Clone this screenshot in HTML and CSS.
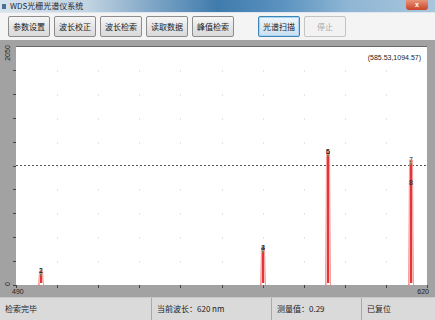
FILE: index.html
```html
<!DOCTYPE html>
<html lang="zh">
<head>
    <meta charset="UTF-8">
    <title>WDS光栅光谱仪系统</title>
    <link rel="stylesheet" href="styles.css">
</head>
<body>

    <!-- Window title bar -->
    <div class="titlebar">
        <span class="app-icon"></span>
        <span class="title">WDS光栅光谱仪系统</span>
        <span class="close-btn">x</span>
    </div>

    <!-- Toolbar -->
    <div class="toolbar">
        <div class="group">
            <button class="btn">参数设置</button>
            <button class="btn">波长校正</button>
            <button class="btn">波长检索</button>
            <button class="btn">读取数据</button>
            <button class="btn">峰值检索</button>
        </div>
        <div class="group">
            <button class="btn active">光谱扫描</button>
            <button class="btn" disabled>停止</button>
        </div>
    </div>

    <!-- Spectrum chart -->
    <div class="chart">
        <svg width="435" height="257" viewBox="0 0 435 257">
            <rect x="16" y="6" width="411" height="239" fill="#fff"/>
            <line x1="16" y1="6.5" x2="427" y2="6.5" stroke="#6a6a6a"/>
            <g id="grid"></g>
            <line x1="16" y1="125.5" x2="427" y2="125.5" stroke="#555" stroke-dasharray="2,2"/>
            <g id="peaks"></g>
            <text class="coord" x="421" y="20" text-anchor="end">(585.53,1094.57)</text>
            <text class="axis" transform="translate(10,13) rotate(-90)" text-anchor="middle">2050</text>
            <text class="axis" transform="translate(10,244) rotate(-90)" text-anchor="middle">0</text>
            <text class="axis" x="12" y="254">490</text>
            <text class="axis" x="429" y="254" text-anchor="end">620</text>
        </svg>
    </div>

    <!-- Status bar -->
    <div class="statusbar">
        <div class="cell w1">检索完毕</div>
        <div class="cell w2">当前波长：620 nm</div>
        <div class="cell w3">测量值：0.29</div>
        <div class="cell w4">已复位</div>
    </div>

    <script>
        var ns = 'http://www.w3.org/2000/svg';

        function el(name, attrs, parent) {
            var e = document.createElementNS(ns, name);
            for (var k in attrs) e.setAttribute(k, attrs[k]);
            parent.appendChild(e);
            return e;
        }

        // grid marks and axis ticks, 10 x 10
        var grid = document.getElementById('grid');
        for (var i = 0; i <= 10; i++) {
            var x = Math.round(16 + i * 41.1);
            el('rect', { x: x, y: 245, width: 1, height: 3, fill: '#444' }, grid);
            for (var j = 1; j < 10; j++) {
                var y = Math.round(6 + j * 23.9);
                if (i > 0 && i < 10) el('rect', { x: x, y: y, width: 1, height: 2, fill: '#e4e4e4' }, grid);
            }
        }
        for (var j = 1; j <= 10; j++) {
            var y = Math.round(6 + j * 23.9);
            el('rect', { x: 13, y: y, width: 3, height: 1, fill: '#444' }, grid);
        }

        // peaks: x position, top y, labels
        var peaks = [
            { x: 41, top: 231, labels: [['1', 233], ['2', 233]] },
            { x: 263, top: 208, labels: [['3', 210], ['4', 210]] },
            { x: 328, top: 112, labels: [['5', 114], ['6', 114]] },
            { x: 411, top: 120, labels: [['7', 122], ['8', 145]] }
        ];
        var pg = document.getElementById('peaks');
        peaks.forEach(function (p) {
            el('polygon', {
                points: (p.x - 2.5) + ',245 ' + (p.x - 1.5) + ',' + p.top + ' ' + (p.x + 1.5) + ',' + p.top + ' ' + (p.x + 2.5) + ',245',
                fill: '#ffc0c0', stroke: '#f58080', 'stroke-width': 0.7
            }, pg);
            el('line', { x1: p.x, y1: p.top + 3, x2: p.x, y2: 245, stroke: '#e02828', 'stroke-width': 1.8 }, pg);
            el('line', { x1: p.x, y1: p.top + 1, x2: p.x, y2: p.top + 5, stroke: '#5a9a5a', 'stroke-width': 1.2 }, pg);
            el('rect', { x: p.x - 1, y: 243, width: 3, height: 2, fill: '#fff' }, pg);
            p.labels.forEach(function (l) {
                var t = el('text', { x: p.x, y: l[1], 'text-anchor': 'middle', 'class': 'peak-label' }, pg);
                t.textContent = l[0];
            });
        });
    </script>

</body>
</html>
```

FILE: styles.css
```css
body {
    margin: 0;
    width: 435px;
    height: 320px;
    overflow: hidden;
    font-family: "Noto Sans CJK SC", "Liberation Sans", sans-serif;
    background-color: #f0f0f0;
}
.titlebar {
    height: 12px;
    display: flex;
    align-items: center;
    padding-left: 2px;
    background: linear-gradient(90deg, #d6e2ec 0%, #c2d4e2 20%, #7fa6c6 35%, #3f7bad 50%, #5b93c0 65%, #8fb6d4 80%, #a9c6dc 100%);
    position: relative;
}
.app-icon {
    width: 4px;
    height: 5px;
    background-color: #4d6f90;
    margin-right: 4px;
}
.title {
    font-size: 8px;
    line-height: 12px;
    color: #1c2a38;
}
.close-btn {
    position: absolute;
    right: 7px;
    top: 0;
    width: 22px;
    height: 10px;
    border-radius: 0 0 3px 3px;
    background: linear-gradient(#e8947a, #c9432a);
    color: #fff;
    font: bold 7px/9px "Liberation Sans", sans-serif;
    text-align: center;
}
.toolbar {
    height: 28px;
    display: flex;
    align-items: center;
    gap: 24px;
    padding-left: 8px;
    background-color: #f4f4f4;
    border-top: 1px solid #dfe6ee;
    box-sizing: border-box;
}
.group {
    display: flex;
    gap: 4px;
}
.btn {
    width: 42px;
    height: 21px;
    padding: 0;
    font-family: "Noto Sans CJK SC", sans-serif;
    font-size: 8px;
    color: #222;
    border: 1px solid #8c8c8c;
    border-radius: 2px;
    background: linear-gradient(#f6f6f6, #e6e6e6 50%, #d9d9d9);
}
.btn.active {
    border-color: #3e86b8;
    background: linear-gradient(#eef6fc, #dbebf7 50%, #c9e0f1);
    box-shadow: inset 0 0 0 1px #a9d3ee;
}
.btn:disabled {
    color: #a8a8a8;
    border-color: #c4c4c4;
    background: #f2f2f2;
}
.chart {
    height: 257px;
    background-color: #a2a2a2;
}
.chart svg {
    display: block;
}
.coord {
    font: 7px "Liberation Sans", sans-serif;
    fill: #222;
}
.axis {
    font: 7px "Liberation Sans", sans-serif;
    fill: #222;
}
.peak-label {
    font: 7px "Liberation Sans", sans-serif;
    fill: #222;
}
.statusbar {
    height: 23px;
    display: flex;
    background-color: #dadada;
    border-top: 1px solid #c8c8c8;
    box-sizing: border-box;
}
.cell {
    font-size: 8px;
    line-height: 22px;
    padding-left: 5px;
    color: #222;
    border-right: 1px solid #a8a8a8;
    box-sizing: border-box;
}
.w1 { width: 152px; }
.w2 { width: 120px; }
.w3 { width: 90px; }
.w4 { flex: 1; border-right: none; }
```
